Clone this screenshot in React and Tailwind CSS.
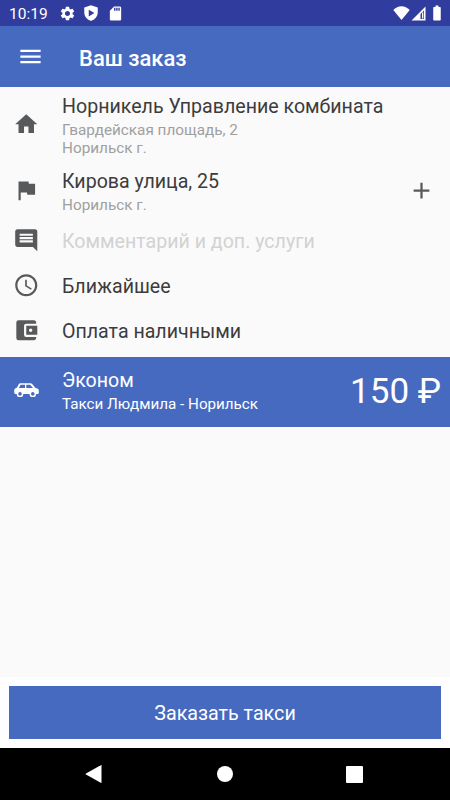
import {
  MdAccessTime,
  MdAccountBalanceWallet,
  MdAdd,
  MdBatteryFull,
  MdComment,
  MdFlag,
  MdHome,
  MdMenu,
  MdSdCard,
  MdSettings,
} from "react-icons/md";

function StatusBar() {
  return (
    <div className="flex h-[26px] items-center bg-[#303d9e] pl-[9px] pr-[4px] text-white">
      <span className="w-[50px] text-[15.500px] leading-[26px] pt-px whitespace-nowrap">10:19</span>
      <MdSettings className="size-[17px]" />
      <svg viewBox="0 0 24 24" className="ml-[6px] size-[18px]" fill="currentColor">
        <path
          fillRule="evenodd"
          d="M12 1.500L3 4.800V11c0 5.500 3.800 10 9 11.500 5.200-1.500 9-6 9-11.500V4.800L12 1.500zM9 7.500v9l7.500-4.500z"
        />
      </svg>
      <MdSdCard className="ml-[7px] size-[17px]" />
      <div className="flex-1" />
      <svg viewBox="0 0 17 14" className="h-[14px] w-[17px]" fill="currentColor">
        <path d="M8.500 14L.3 4C2.600 1.600 5.400.2 8.500.2s5.900 1.400 8.200 3.800z" />
      </svg>
      <svg viewBox="0 0 15 15" className="ml-px h-[15px] w-[15px]" fill="currentColor">
        <path fillRule="evenodd" d="M14.500.5v14H.5zM13 4.500L9.500 8v5H13z" />
        <path d="M11 6.500h1.300v6H11z" />
      </svg>
      <MdBatteryFull className="ml-[2px] size-[18px]" />
    </div>
  );
}

function Row({ icon: Icon, className, children }) {
  return (
    <div className={"flex items-center pl-[13px] " + className}>
      <Icon className="mr-[22.500px] size-[26.500px] shrink-0 text-[#58595b]" />
      {children}
    </div>
  );
}

function CarIcon() {
  return (
    <svg viewBox="0 0 25 14" className="mb-[4px] ml-[14px] mr-[23px] h-[14px] w-[25px] shrink-0" fill="white">
      <path
        fillRule="evenodd"
        d="M7 .2h9c1 0 1.700.3 2.400 1.100L21.500 5l1.700.5c1.100.4 1.600 1.100 1.600 2.200v1.800c0 1-.5 1.500-1.400 1.500h-1.300a3.300 3.300 0 0 1-6.600 0H9.300a3.300 3.300 0 0 1-6.600 0H1.600C.7 11 .2 10.500.2 9.600V7.500c0-.9.300-1.500 1-1.900L3 4.500l1.600-3C5 .6 5.800.2 7 .2zM6.600 1.800L4.900 5H11V1.800zM12.300 1.800V5h6.600l-2.300-2.700c-.3-.4-.6-.5-1-.5zM6 9.100a1.800 1.800 0 1 0 0 3.600 1.800 1.800 0 0 0 0-3.600zM18.800 9.100a1.800 1.800 0 1 0 0 3.600 1.800 1.800 0 0 0 0-3.600z"
      />
    </svg>
  );
}

export default function App() {
  return (
    <div className="flex h-[800px] w-[450px] flex-col overflow-hidden bg-[#fafafa] font-[Roboto,sans-serif] text-[#3c3c3e]">
      <StatusBar />
      <header className="flex h-[61px] items-center bg-[#476ac1] pl-[17px] text-white">
        <MdMenu className="mr-[35px] size-[27px]" />
        <h1 className="pt-[3px] text-[22px] font-medium">Ваш заказ</h1>
      </header>

      <main className="flex flex-1 flex-col">
        <Row icon={MdHome} className="h-[75px]">
          <div className="pt-px">
            <p className="text-[19.600px] leading-[26px]">Норникель Управление комбината</p>
            <p className="pt-px text-[15.300px] leading-[18px] text-[#a0a0a0]">
              Гвардейская площадь, 2<br />
              Норильск г.
            </p>
          </div>
        </Row>
        <Row icon={MdFlag} className="h-[56px]">
          <div className="flex-1 pt-[3px]">
            <p className="text-[19.600px] leading-[26px]">Кирова улица, 25</p>
            <p className="pt-px text-[15.300px] leading-[18px] text-[#a0a0a0]">Норильск г.</p>
          </div>
          <MdAdd className="mr-[15px] size-[27px] text-[#58595b]" />
        </Row>
        <Row icon={MdComment} className="h-[45px]">
          <p className="pt-[3px] text-[19.600px] text-[#d2d2d2]">Комментарий и доп. услуги</p>
        </Row>
        <Row icon={MdAccessTime} className="h-[45px]">
          <p className="pt-[3px] text-[19.600px]">Ближайшее</p>
        </Row>
        <Row icon={MdAccountBalanceWallet} className="h-[44px]">
          <p className="pt-[4px] text-[19.600px]">Оплата наличными</p>
        </Row>

        <div className="mt-[5px] flex h-[70px] items-center bg-[#476ac1] pr-[9px] text-white">
          <CarIcon />
          <div className="flex-1 pb-[2px]">
            <p className="text-[19.600px] leading-[26px]">Эконом</p>
            <p className="text-[15.200px] leading-[20px]">Такси Людмила - Норильск</p>
          </div>
          <span className="text-[35px]">150 ₽</span>
        </div>
      </main>

      <div className="h-[71px] bg-white px-[9px] pt-[9px]">
        <button className="h-[53px] w-full bg-[#476ac1] pt-[2px] text-[19.700px] text-white">Заказать такси</button>
      </div>

      <nav className="flex h-[52px] items-center bg-black text-white">
        <svg viewBox="0 0 17 18" className="ml-[85px] h-[18px] w-[17px]" fill="currentColor">
          <path d="M16.500.6v16.800c0 .5-.4.6-.8.400L1 9.600c-.5-.3-.5-.9 0-1.200L15.700.2c.4-.2.8-.1.800.4z" />
        </svg>
        <span className="ml-[115px] size-[16px] rounded-full bg-white" />
        <span className="ml-[113px] size-[17px] rounded-[1px] bg-white" />
      </nav>
    </div>
  );
}
